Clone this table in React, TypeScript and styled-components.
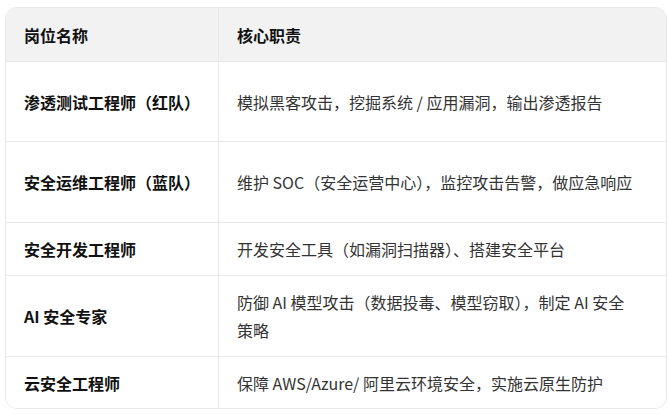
import React from "react";
import styled, { createGlobalStyle } from "styled-components";

const GlobalStyle = createGlobalStyle`
  html, body {
    margin: 0;
    padding: 0;
    background: #fff;
  }
  body {
    font-family: "Noto Sans CJK SC", "Noto Sans", "Liberation Sans", sans-serif;
  }
`;

const Page = styled.div`
  padding: 7px 0 0 5px;
`;

const Table = styled.div`
  width: 662px;
  box-sizing: border-box;
  border: 1px solid #e8e8e8;
  border-radius: 12px;
  overflow: hidden;
`;

const Row = styled.div<{ $h: number; $head?: boolean; $last?: boolean }>`
  display: grid;
  grid-template-columns: 212px 1fr;
  min-height: ${(p) => p.$h}px;
  background: ${(p) => (p.$head ? "#f2f2f2" : "#fff")};
  border-bottom: ${(p) => (p.$last ? "none" : "1px solid #e8e8e8")};
`;

const Cell = styled.div<{ $head?: boolean; $name?: boolean }>`
  display: flex;
  align-items: center;
  padding: 0 18px;
  font-size: 16px;
  line-height: 28px;
  color: ${(p) => (p.$head || p.$name ? "#111" : "#333")};
  font-weight: ${(p) => (p.$head || p.$name ? 700 : 400)};
  & + & {
    border-left: 1px solid #e8e8e8;
  }
`;

const Text = styled.span``;

const Keep = styled.span`
  white-space: nowrap;
`;

const rows = [
  { name: "渗透测试工程师（红队）", duty: ["模拟黑客攻击，挖掘系统 / 应用漏洞，输出渗透报告"], h: 79 },
  { name: "安全运维工程师（蓝队）", duty: ["维护 SOC（安全运营中心），监控攻击告警，做应急响应"], h: 80 },
  { name: "安全开发工程师", duty: ["开发安全工具（如漏洞扫描器）、搭建安全平台"], h: 52 },
  { name: "AI 安全专家", duty: ["防御 AI 模型攻击（数据投毒、模型窃取），制定 AI 安全", "策略"], h: 80 },
  { name: "云安全工程师", duty: ["保障 AWS/Azure/ 阿里云环境安全，实施云原生防护"], h: 51 },
];

const App = () => {
  return (
    <Page>
      <GlobalStyle />
      <Table>
        <Row $h={53} $head>
          <Cell $head>岗位名称</Cell>
          <Cell $head>核心职责</Cell>
        </Row>
        {rows.map((r, i) => (
          <Row key={r.name} $h={r.h} $last={i === rows.length - 1}>
            <Cell $name>{r.name}</Cell>
            <Cell>
              <Text>
                {r.duty[0]}
                {r.duty[1] && <Keep>{r.duty[1]}</Keep>}
              </Text>
            </Cell>
          </Row>
        ))}
      </Table>
    </Page>
  );
};

export default App;
